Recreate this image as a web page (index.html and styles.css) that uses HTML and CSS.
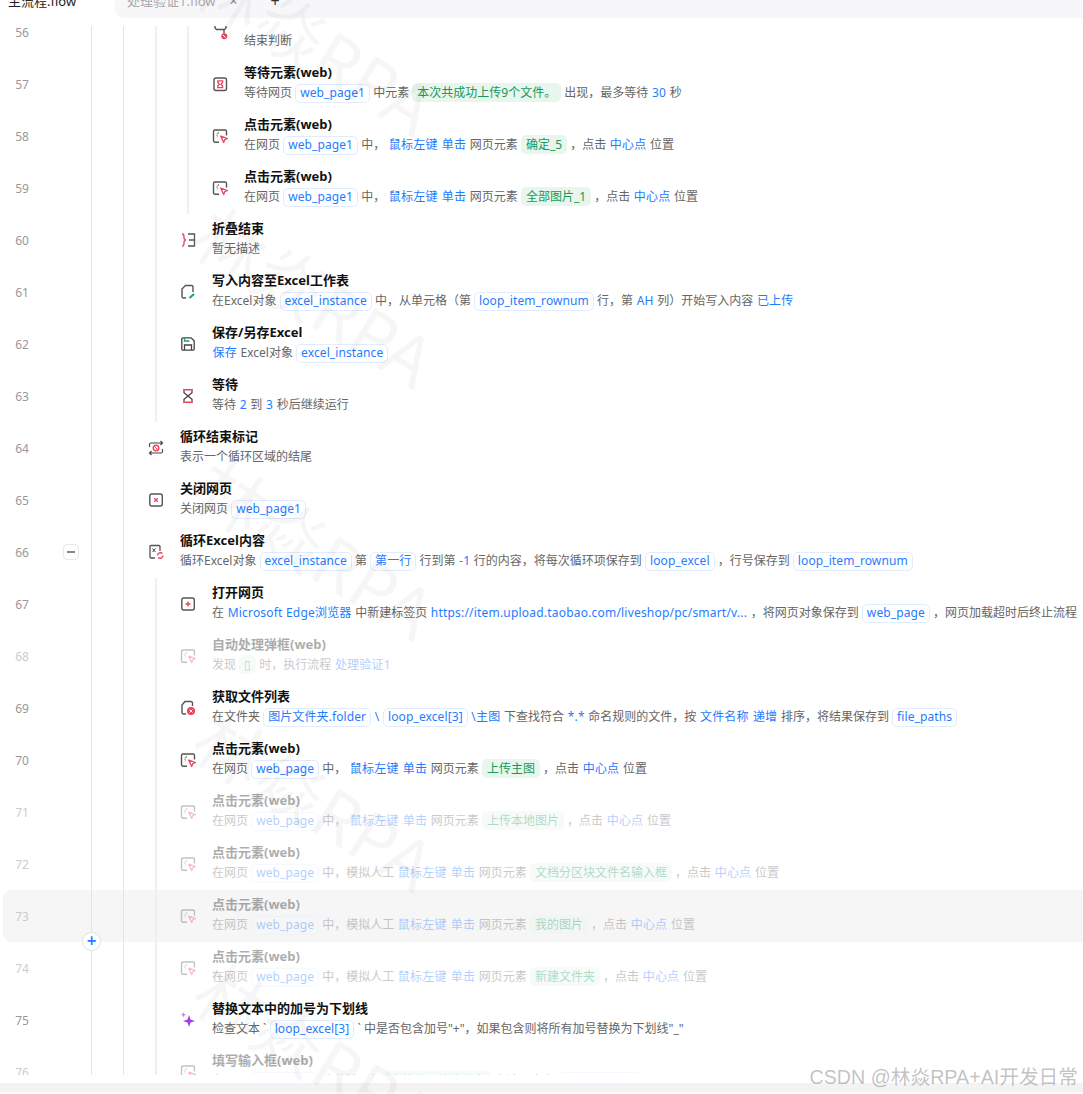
FILE: index.html
```html
<!DOCTYPE html>
<html lang="zh-CN">
<head>
  <meta charset="UTF-8" />
  <title>主流程.flow</title>
  <link rel="stylesheet" href="styles.css">
</head>
<body>

  <!-- shared icons -->
  <svg class="defs" width="0" height="0">
    <symbol id="i-click" viewBox="0 0 16 16">
      <path d="M7 14.300H3a1.500 1.500 0 0 1-1.500-1.500V3.500A1.500 1.500 0 0 1 3 2h10a1.500 1.500 0 0 1 1.500 1.500V7.500" fill="none" stroke="#555" stroke-width="1.400"/>
      <path d="M4.800 5l.8.8M6.500 4.300v1.300M4.300 7.200h1.300M4.800 9.400l.8-.7" stroke="#555" stroke-width=".9"/>
      <path d="M8.700 8l6.700 2.500-2.700 1.100-1 2.900z" fill="#fff" stroke="#f0405a" stroke-width="1.300" stroke-linejoin="round"/>
    </symbol>
  </svg>

  <div class="tabs">
    <div class="tab active">主流程.flow</div>
    <div class="tabs-rest">
      <span class="tab">处理验证1.flow</span>
      <span class="tab-close">×</span>
      <span class="tab-add">+</span>
    </div>
  </div>

  <div class="list">

    <div class="row first">
      <span class="num">56</span><span class="gutter"></span>
      <span class="guide"></span><span class="guide"></span><span class="guide"></span><span class="guide"></span>
      <svg class="icon" viewBox="0 0 16 16"><path d="M3 1v3l1.500 1.500h8L14 4V1M12 5.500v4" fill="none" stroke="#555" stroke-width="1.400"/><circle cx="12.300" cy="12.300" r="3" fill="#f0405a"/><path d="M11 11l2.600 2.600" stroke="#fff"/></svg>
      <div class="text"><div class="title"></div><div class="desc">结束判断</div></div>
    </div>

    <div class="row">
      <span class="num">57</span><span class="gutter"></span>
      <span class="guide"></span><span class="guide"></span><span class="guide"></span><span class="guide"></span>
      <svg class="icon" viewBox="0 0 16 16"><rect x="2" y="2" width="12.500" height="12.500" rx="2" fill="none" stroke="#555" stroke-width="1.400"/><path d="M5.800 4.800h4.800v1.600L9 8.200l1.600 1.800v1.600H5.800V10l1.600-1.800-1.600-1.800z" fill="#fff" stroke="#f0405a" stroke-width="1.300"/></svg>
      <div class="text"><div class="title">等待元素(web)</div><div class="desc">等待网页 <span class="chip">web_page1</span> 中元素 <span class="chip g">本次共成功上传9个文件。</span> 出现，最多等待 <span class="b">30</span> 秒</div></div>
    </div>

    <div class="row">
      <span class="num">58</span><span class="gutter"></span>
      <span class="guide"></span><span class="guide"></span><span class="guide"></span><span class="guide"></span>
      <svg class="icon"><use href="#i-click"/></svg>
      <div class="text"><div class="title">点击元素(web)</div><div class="desc">在网页 <span class="chip">web_page1</span> 中， <span class="b">鼠标左键</span> <span class="b">单击</span> 网页元素 <span class="chip g">确定_5</span> ，点击 <span class="b">中心点</span> 位置</div></div>
    </div>

    <div class="row">
      <span class="num">59</span><span class="gutter"></span>
      <span class="guide"></span><span class="guide"></span><span class="guide"></span><span class="guide"></span>
      <svg class="icon"><use href="#i-click"/></svg>
      <div class="text"><div class="title">点击元素(web)</div><div class="desc">在网页 <span class="chip">web_page1</span> 中， <span class="b">鼠标左键</span> <span class="b">单击</span> 网页元素 <span class="chip g">全部图片_1</span> ，点击 <span class="b">中心点</span> 位置</div></div>
    </div>

    <div class="row">
      <span class="num">60</span><span class="gutter"></span>
      <span class="guide"></span><span class="guide"></span><span class="guide"></span>
      <svg class="icon" viewBox="0 0 16 16"><path d="M2 2c2 0 2 1 2 2.500v2L5.500 8 4 9.500v2C4 13 4 14 2 14" fill="none" stroke="#f0405a" stroke-width="1.300"/><path d="M8 2h6.500v12H8M9 8h5.500" fill="none" stroke="#555" stroke-width="1.300"/></svg>
      <div class="text"><div class="title">折叠结束</div><div class="desc">暂无描述</div></div>
    </div>

    <div class="row">
      <span class="num">61</span><span class="gutter"></span>
      <span class="guide"></span><span class="guide"></span><span class="guide"></span>
      <svg class="icon" viewBox="0 0 16 16"><path d="M6 14H3.500A1.500 1.500 0 0 1 2 12.500V5l3.500-3.500h6A1.500 1.500 0 0 1 13 3v5" fill="none" stroke="#555" stroke-width="1.400"/><path d="M9.500 14l4.500-4" stroke="#17a35c" stroke-width="2"/></svg>
      <div class="text"><div class="title">写入内容至Excel工作表</div><div class="desc">在Excel对象 <span class="chip">excel_instance</span> 中，从单元格（第 <span class="chip">loop_item_rownum</span> 行，第 <span class="b">AH</span> 列）开始写入内容 <span class="b">已上传</span></div></div>
    </div>

    <div class="row">
      <span class="num">62</span><span class="gutter"></span>
      <span class="guide"></span><span class="guide"></span><span class="guide"></span>
      <svg class="icon" viewBox="0 0 16 16"><path d="M3 1.800h8l3.200 3V13a1.200 1.200 0 0 1-1.200 1.200H3A1.200 1.200 0 0 1 1.800 13V3A1.200 1.200 0 0 1 3 1.800z" fill="none" stroke="#444" stroke-width="1.300"/><path d="M4.500 14V9h7v5" fill="none" stroke="#444" stroke-width="1.300"/><path d="M4.500 2v3h5" fill="none" stroke="#17a35c" stroke-width="1.300"/></svg>
      <div class="text"><div class="title">保存/另存Excel</div><div class="desc"><span class="b">保存</span> Excel对象 <span class="chip">excel_instance</span></div></div>
    </div>

    <div class="row">
      <span class="num">63</span><span class="gutter"></span>
      <span class="guide"></span><span class="guide"></span><span class="guide"></span>
      <svg class="icon" viewBox="0 0 16 16"><path d="M4 2.500v2.200L8 8l-4 3.300v2.200M12 2.500v2.200L8 8l4 3.300v2.200" fill="none" stroke="#444" stroke-width="1.300"/><path d="M3 1.800h10M3 14.200h10" stroke="#f0405a" stroke-width="1.500"/></svg>
      <div class="text"><div class="title">等待</div><div class="desc">等待 <span class="b">2</span> 到 <span class="b">3</span> 秒后继续运行</div></div>
    </div>

    <div class="row">
      <span class="num">64</span><span class="gutter"></span>
      <span class="guide"></span><span class="guide"></span>
      <svg class="icon" viewBox="0 0 16 16"><path d="M1.500 7V4.500A1.500 1.500 0 0 1 3 3h11.500M12.500 1l2 2-2 2M14.500 9v2.500a1.500 1.500 0 0 1-1.500 1.500H1.500M3.500 11l-2 2 2 2" fill="none" stroke="#444" stroke-width="1.100"/><circle cx="8" cy="8" r="2.800" fill="none" stroke="#f0405a" stroke-width="1.400"/><path d="M6.300 6.300l3.400 3.400" stroke="#f0405a"/></svg>
      <div class="text"><div class="title">循环结束标记</div><div class="desc">表示一个循环区域的结尾</div></div>
    </div>

    <div class="row">
      <span class="num">65</span><span class="gutter"></span>
      <span class="guide"></span><span class="guide"></span>
      <svg class="icon" viewBox="0 0 16 16"><rect x="1.800" y="2" width="12.500" height="12" rx="2" fill="none" stroke="#555" stroke-width="1.400"/><path d="M6.300 6.300l3.400 3.400M9.700 6.300l-3.400 3.400" stroke="#f0405a" stroke-width="1.300"/></svg>
      <div class="text"><div class="title">关闭网页</div><div class="desc">关闭网页 <span class="chip">web_page1</span></div></div>
    </div>

    <div class="row">
      <span class="num">66</span><span class="gutter"><span class="collapse"></span></span>
      <span class="guide"></span><span class="guide"></span>
      <svg class="icon" viewBox="0 0 16 16"><path d="M7 14H3a1 1 0 0 1-1-1V2.500a1 1 0 0 1 1-1h8a1 1 0 0 1 1 1V7" fill="none" stroke="#555" stroke-width="1.300"/><path d="M4.500 4.500l3 3.500M7.500 4.500l-3 3.500" stroke="#444"/><path d="M9.500 11.500a3 3 0 0 1 5-2M15 11.500a3 3 0 0 1-5 2" fill="none" stroke="#f0405a" stroke-width="1.400"/></svg>
      <div class="text"><div class="title">循环Excel内容</div><div class="desc">循环Excel对象 <span class="chip">excel_instance</span> 第 <span class="chip">第一行</span> 行到第 <span class="b">-1</span> 行的内容，将每次循环项保存到 <span class="chip">loop_excel</span> ，行号保存到 <span class="chip">loop_item_rownum</span></div></div>
    </div>

    <div class="row">
      <span class="num">67</span><span class="gutter"></span>
      <span class="guide"></span><span class="guide"></span><span class="guide"></span>
      <svg class="icon" viewBox="0 0 16 16"><rect x="1.800" y="2" width="12.500" height="12" rx="2" fill="none" stroke="#555" stroke-width="1.400"/><path d="M8 5.500v5M5.500 8h5" stroke="#f0405a" stroke-width="1.400"/></svg>
      <div class="text"><div class="title">打开网页</div><div class="desc">在 <span class="b">Microsoft Edge浏览器</span> 中新建标签页 <span class="b">https://item.upload.taobao.com/liveshop/pc/smart/v...</span> ，将网页对象保存到 <span class="chip">web_page</span> ，网页加载超时后终止流程</div></div>
    </div>

    <div class="row off">
      <span class="num">68</span><span class="gutter"></span>
      <span class="guide"></span><span class="guide"></span><span class="guide"></span>
      <svg class="icon"><use href="#i-click"/></svg>
      <div class="text"><div class="title">自动处理弹框(web)</div><div class="desc">发现 <span class="chip g">▯</span> 时，执行流程 <span class="b">处理验证1</span></div></div>
    </div>

    <div class="row">
      <span class="num">69</span><span class="gutter"></span>
      <span class="guide"></span><span class="guide"></span><span class="guide"></span>
      <svg class="icon" viewBox="0 0 16 16"><path d="M6 14H3.500A1.500 1.500 0 0 1 2 12.500V5l3-3.500h6A1.500 1.500 0 0 1 12.500 3v3" fill="none" stroke="#555" stroke-width="1.400"/><circle cx="11" cy="11" r="4" fill="#f0405a"/><path d="M9.500 9.500l3 3M12.500 9.500l-3 3" stroke="#fff"/></svg>
      <div class="text"><div class="title">获取文件列表</div><div class="desc">在文件夹 <span class="chip">图片文件夹.folder</span> <span class="b">\</span> <span class="chip">loop_excel[3]</span> <span class="b">\主图</span> 下查找符合 <span class="b">*.*</span> 命名规则的文件，按 <span class="b">文件名称</span> <span class="b">递增</span> 排序，将结果保存到 <span class="chip">file_paths</span></div></div>
    </div>

    <div class="row">
      <span class="num">70</span><span class="gutter"></span>
      <span class="guide"></span><span class="guide"></span><span class="guide"></span>
      <svg class="icon"><use href="#i-click"/></svg>
      <div class="text"><div class="title">点击元素(web)</div><div class="desc">在网页 <span class="chip">web_page</span> 中， <span class="b">鼠标左键</span> <span class="b">单击</span> 网页元素 <span class="chip g">上传主图</span> ，点击 <span class="b">中心点</span> 位置</div></div>
    </div>

    <div class="row off">
      <span class="num">71</span><span class="gutter"></span>
      <span class="guide"></span><span class="guide"></span><span class="guide"></span>
      <svg class="icon"><use href="#i-click"/></svg>
      <div class="text"><div class="title">点击元素(web)</div><div class="desc">在网页 <span class="chip">web_page</span> 中， <span class="b">鼠标左键</span> <span class="b">单击</span> 网页元素 <span class="chip g">上传本地图片</span> ，点击 <span class="b">中心点</span> 位置</div></div>
    </div>

    <div class="row off">
      <span class="num">72</span><span class="gutter"></span>
      <span class="guide"></span><span class="guide"></span><span class="guide"></span>
      <svg class="icon"><use href="#i-click"/></svg>
      <div class="text"><div class="title">点击元素(web)</div><div class="desc">在网页 <span class="chip">web_page</span> 中，模拟人工 <span class="b">鼠标左键</span> <span class="b">单击</span> 网页元素 <span class="chip g">文档分区块文件名输入框</span> ，点击 <span class="b">中心点</span> 位置</div></div>
    </div>

    <div class="row off hover">
      <span class="num">73</span><span class="gutter"></span>
      <span class="guide"></span><span class="guide"></span><span class="guide"></span>
      <svg class="icon"><use href="#i-click"/></svg>
      <div class="text"><div class="title">点击元素(web)</div><div class="desc">在网页 <span class="chip">web_page</span> 中，模拟人工 <span class="b">鼠标左键</span> <span class="b">单击</span> 网页元素 <span class="chip g">我的图片</span> ，点击 <span class="b">中心点</span> 位置</div></div>
      <span class="add-step">+</span>
    </div>

    <div class="row off">
      <span class="num">74</span><span class="gutter"></span>
      <span class="guide"></span><span class="guide"></span><span class="guide"></span>
      <svg class="icon"><use href="#i-click"/></svg>
      <div class="text"><div class="title">点击元素(web)</div><div class="desc">在网页 <span class="chip">web_page</span> 中，模拟人工 <span class="b">鼠标左键</span> <span class="b">单击</span> 网页元素 <span class="chip g">新建文件夹</span> ，点击 <span class="b">中心点</span> 位置</div></div>
    </div>

    <div class="row">
      <span class="num">75</span><span class="gutter"></span>
      <span class="guide"></span><span class="guide"></span><span class="guide"></span>
      <svg class="icon" viewBox="0 0 16 16"><path d="M9 3l1.500 4.500L15 9l-4.500 1.500L9 15l-1.500-4.500L3 9l4.500-1.500z" fill="#a33cf0"/><path d="M3.500 0l.7 2 2 .7-2 .7-.7 2-.7-2-2-.7 2-.7z" fill="#c77bf5"/></svg>
      <div class="text"><div class="title">替换文本中的加号为下划线</div><div class="desc">检查文本 ` <span class="chip">loop_excel[3]</span> ` 中是否包含加号"+"，如果包含则将所有加号替换为下划线"_"</div></div>
    </div>

    <div class="row off">
      <span class="num">76</span><span class="gutter"></span>
      <span class="guide"></span><span class="guide"></span><span class="guide"></span>
      <svg class="icon"><use href="#i-click"/></svg>
      <div class="text"><div class="title">填写输入框(web)</div><div class="desc">在网页 <span class="chip">web_page</span> 中的输入框 <span class="chip g">文档分区块文件名</span> 中填写内容 <span class="chip">loop_excel[3]</span></div></div>
    </div>

  </div>

  <div class="hscroll"></div>

  <div class="watermarks">
    <div class="wm">林焱RPA</div>
    <div class="wm">林焱RPA</div>
    <div class="wm">林焱RPA</div>
    <div class="wm">林焱RPA</div>
    <div class="wm">林焱RPA</div>
  </div>

  <div class="csdn">CSDN @林焱RPA+AI开发日常</div>

</body>
</html>
```

FILE: styles.css
```css
* {
  box-sizing: border-box;
}

html, body {
  height: 1094px;
  overflow: hidden;
}

body {
  margin: 0;
  position: relative;
  background: white;
  font-family: "Noto Sans", "Noto Sans CJK SC", sans-serif;
  font-size: 12px;
  color: #666;
}

.defs {
  position: absolute;
}

/* tab strip, cut off at the top of the picture */
.tabs {
  display: flex;
  height: 18px;
  margin-bottom: 8px;
  overflow: hidden;
  font-size: 13px;
  line-height: 20px;
}

.tab.active {
  width: 115px;
  padding-left: 8px;
  margin-top: -9px;
  color: #222;
}

.tabs-rest {
  flex: 1;
  display: flex;
  align-items: flex-start;
  padding-left: 12px;
  background: #f7f7f9;
  border-bottom-left-radius: 9px;
  color: #aaa;
}

.tabs-rest span {
  margin-top: -9px;
}

.tab-close {
  margin-left: 14px;
  color: #888;
  font-size: 14px;
}

.tab-add {
  margin-left: 33px;
  color: #333;
  font-size: 16px;
}

/* step list */
.list {
  height: 1049px;
  overflow: hidden;
}

.row {
  position: relative;
  display: flex;
  align-items: center;
  height: 52px;
}

.row.first {
  margin-top: -20px;
}

.row.hover::before {
  content: "";
  position: absolute;
  top: 0;
  bottom: 0;
  left: 3px;
  right: 0;
  background: #f6f6f6;
  border-radius: 8px 0 0 8px;
  z-index: -1;
}

.num {
  flex: none;
  width: 44px;
  text-align: center;
  color: #999;
}

.off .num {
  color: #ccc;
}

.gutter {
  flex: none;
  width: 40px;
}

.collapse {
  display: block;
  position: relative;
  width: 16px;
  height: 16px;
  margin-left: 19px;
  background: white;
  border: 1px solid #e8e8e8;
  border-radius: 4px;
}

.collapse::after {
  content: "";
  position: absolute;
  left: 3px;
  right: 3px;
  top: 6px;
  height: 2px;
  background: #888;
}

.guide {
  flex: none;
  align-self: stretch;
  width: 32px;
  background: linear-gradient(#efefef, #efefef) 7px 0 / 2px 100% no-repeat;
}

.gutter + .guide,
.gutter + .guide + .guide {
  background: linear-gradient(#e4e4e4, #e4e4e4) 7px 0 / 1px 100% no-repeat;
}

.icon {
  flex: none;
  width: 16px;
  height: 16px;
  margin-right: 16px;
}

.text {
  padding-bottom: 3px;
  white-space: nowrap;
}

.title {
  height: 20px;
  line-height: 20px;
  font-size: 13px;
  font-weight: 700;
  color: #111;
}

.desc {
  height: 20px;
  margin-top: 1px;
  line-height: 20px;
}

.b {
  margin: 0 0.500px;
  letter-spacing: 0.200px;
  color: #1f7bff;
}

.chip {
  display: inline-block;
  height: 19px;
  line-height: 16px;
  padding: 0 4px;
  border: 1.500px solid #e0edff;
  border-radius: 5px;
  letter-spacing: 0.100px;
  color: #1f7bff;
}

.chip.g {
  border: 0;
  line-height: 19px;
  padding: 0 5px;
  letter-spacing: 0;
  background: #e8f6ee;
  color: #18995a;
}

.off .icon,
.off .text {
  opacity: 0.35;
}

.add-step {
  position: absolute;
  left: 82px;
  bottom: -9px;
  width: 19px;
  height: 19px;
  line-height: 16px;
  text-align: center;
  font-size: 17px;
  font-weight: 600;
  color: #1f7bff;
  background: white;
  border: 1px solid #e2e2e2;
  border-radius: 50%;
  z-index: 1;
}

.hscroll {
  height: 9px;
  margin-top: 8px;
  background: #f3f3f5;
}

/* faint diagonal marks over everything */
.watermarks {
  position: absolute;
  top: 0;
  left: 0;
  right: 0;
  bottom: 0;
  padding-left: 160px;
  overflow: hidden;
  pointer-events: none;
}

.wm {
  height: 252px;
  width: 310px;
  line-height: 252px;
  text-align: center;
  font-size: 70px;
  color: rgba(0, 0, 0, 0.035);
  white-space: nowrap;
  transform: rotate(32deg);
}

.wm:first-child {
  margin-top: -81px;
}

.csdn {
  position: absolute;
  right: 5px;
  bottom: 4px;
  font-family: "Liberation Sans", "Noto Sans CJK SC", sans-serif;
  font-size: 19.700px;
  color: rgba(120, 120, 120, 0.45);
}
```
